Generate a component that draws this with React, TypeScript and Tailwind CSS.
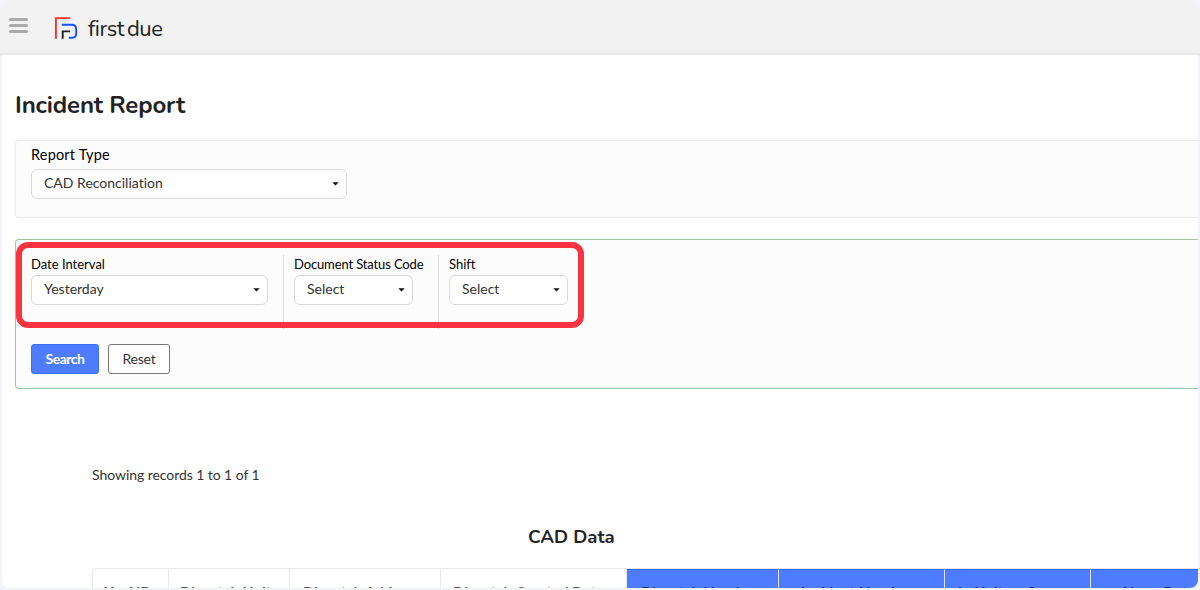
import clsx from "clsx"

interface SelectBoxProps {
    value: string
    className?: string
}

const columns = [
    { label: "Xref ID", width: "w-[76px] pl-[11px]" },
    { label: "Dispatch Unit", width: "w-[121px] pl-[11px]" },
    { label: "Dispatch Address", width: "w-[151px] pl-[13px]" },
    { label: "Dispatch Created Date", width: "w-[186px] pl-[12px]" },
    { label: "Dispatch Number", width: "w-[152px] pl-[14px]", blue: true },
    { label: "Incident Number", width: "w-[166px] pl-[22px]", blue: true },
    { label: "In Unit on Scene", width: "w-[146px] pl-[13px]", blue: true },
    { label: "Alarm Date", width: "w-[180px] pl-[29px]", blue: true },
]

function SelectBox({ value, className }: SelectBoxProps) {
    return (
        <button
            className={clsx(
                "flex items-center justify-between h-[30px] pl-3 pr-[7px] rounded-[6px] border border-[#d9d9d9] bg-white text-[14px] leading-none text-[#333]",
                className
            )}
        >
            <span className="pb-[3px]">{value}</span>
            <svg className="mb-px" width="7" height="4" viewBox="0 0 7 4" fill="#111">
                <path d="M0.3 0.3h6.4L3.5 3.6z" />
            </svg>
        </button>
    )
}

function Logo() {
    return (
        <svg width="24" height="24" viewBox="0 0 24 24" fill="none" strokeWidth="1.9">
            <path d="M1.9 22.8V2.1H16.2" stroke="#fa2c2c" />
            <path d="M7.8 8.7H17.4Q22.2 8.7 22.2 13.2V17.4Q22.2 21.8 17.5 21.8H14.8" stroke="#1450ff" />
            <path d="M8.7 22.8V15.4H16.2" stroke="#222" />
        </svg>
    )
}

export default function App() {
    return (
        <div className="h-[590px] overflow-hidden bg-[#f3f3fa] pb-[2px] font-[Lato,sans-serif] text-[#222] [font-variant-ligatures:none]">
            <div className="h-[588px] overflow-hidden rounded-t-[10px]">
                {/* Top bar */}
                <header className="flex h-[55px] items-start border-b-2 border-[#e8e8e8] bg-[#f2f2f2] pl-[9px]">
                    <div className="mt-[18px] flex w-[19px] flex-col gap-[3px]">
                        <span className="h-[3px] rounded-full bg-[#aaa]" />
                        <span className="h-[3px] rounded-full bg-[#aaa]" />
                        <span className="h-[3px] rounded-full bg-[#aaa]" />
                    </div>
                    <div className="ml-[26px] mt-[16px]">
                        <Logo />
                    </div>
                    <span className="ml-[10px] mt-[16px] font-[Nunito,Lato,sans-serif] text-[22px] leading-[27px] tracking-[-0.5px] text-[#222] [word-spacing:-2px]">first due</span>
                </header>

                <main className="mx-[2px] h-[533px] overflow-hidden rounded-b-[8px] bg-white pl-[13px]">
                    <h1 className="pt-[35px] font-[Nunito,Lato,sans-serif] text-[24px] font-bold leading-[30px] tracking-[-0.13px]">Incident Report</h1>

                    {/* Report type */}
                    <section className="mt-[20px] h-[78px] rounded-l-[4px] border border-r-0 border-[#ebebeb] bg-[#fcfcfc] pl-[15px] pt-[5px]">
                        <div className="mb-[5px] text-[14.5px] leading-[18px] tracking-[0.18px] text-black">Report Type</div>
                        <SelectBox value="CAD Reconciliation" className="w-[316px]" />
                    </section>

                    {/* Filters */}
                    <section className="relative mt-[21px] h-[150px] rounded-l-[4px] border border-r-0 border-[#9cc9a1] bg-[#fcfcfc] pl-[15px] pt-[15px]">
                        <div className="flex h-[74px] text-[13px] leading-[18px] text-black">
                            <div className="w-[252px]">
                                <div className="mb-[2px]">Date Interval</div>
                                <SelectBox value="Yesterday" className="w-[237px]" />
                            </div>
                            <div className="w-[155px] border-l border-[#dedede] pl-[10px]">
                                <div className="mb-[2px] whitespace-nowrap tracking-[-0.13px]">Document Status Code</div>
                                <SelectBox value="Select" className="w-[119px]" />
                            </div>
                            <div className="border-l border-[#dedede] pl-[10px]">
                                <div className="mb-[2px]">Shift</div>
                                <SelectBox value="Select" className="w-[119px]" />
                            </div>
                        </div>
                        <div className="mt-[15px] flex gap-[9px] text-[14px]">
                            <button className="h-[30px] w-[68px] rounded-[3px] border border-[#3d72f5] bg-[#4d7cfe] pb-[2px] font-bold tracking-[-0.5px] text-white">Search</button>
                            <button className="h-[30px] w-[62px] rounded-[3px] border border-[#777] bg-white pb-[2px] tracking-[-0.2px] text-[#333]">Reset</button>
                        </div>
                        <div className="pointer-events-none absolute left-0 top-[2px] h-[86px] w-[568px] rounded-[12px] border-[6px] border-[#f83440]" />
                    </section>

                    {/* Results */}
                    <p className="mt-[76px] pl-[77px] text-[14px] leading-[20px] tracking-[-0.06px] text-[#333]">Showing records 1 to 1 of 1</p>
                    <h2 className="mt-[40px] pl-[513px] font-[Nunito,Lato,sans-serif] text-[18.5px] font-bold leading-[24px]">CAD Data</h2>
                    <div className="ml-[77px] mt-[19px] flex w-[1200px] rounded-tl-[4px] border-l border-t border-[#e8e8e8]">
                        {columns.map((col) => (
                            <div
                                key={col.label}
                                className={clsx(
                                    "h-[60px] shrink-0 whitespace-nowrap border-r text-[15px] font-bold leading-[20px]",
                                    col.width,
                                    col.blue ? "border-[#dde3f5] border-t border-t-[#2f68f5] bg-[#4d7cfe] pt-[12px] text-[#182a58]" : "border-[#e8e8e8] pt-[13px] text-[#555]"
                                )}
                            >
                                {col.label}
                            </div>
                        ))}
                    </div>
                </main>
            </div>
        </div>
    )
}
